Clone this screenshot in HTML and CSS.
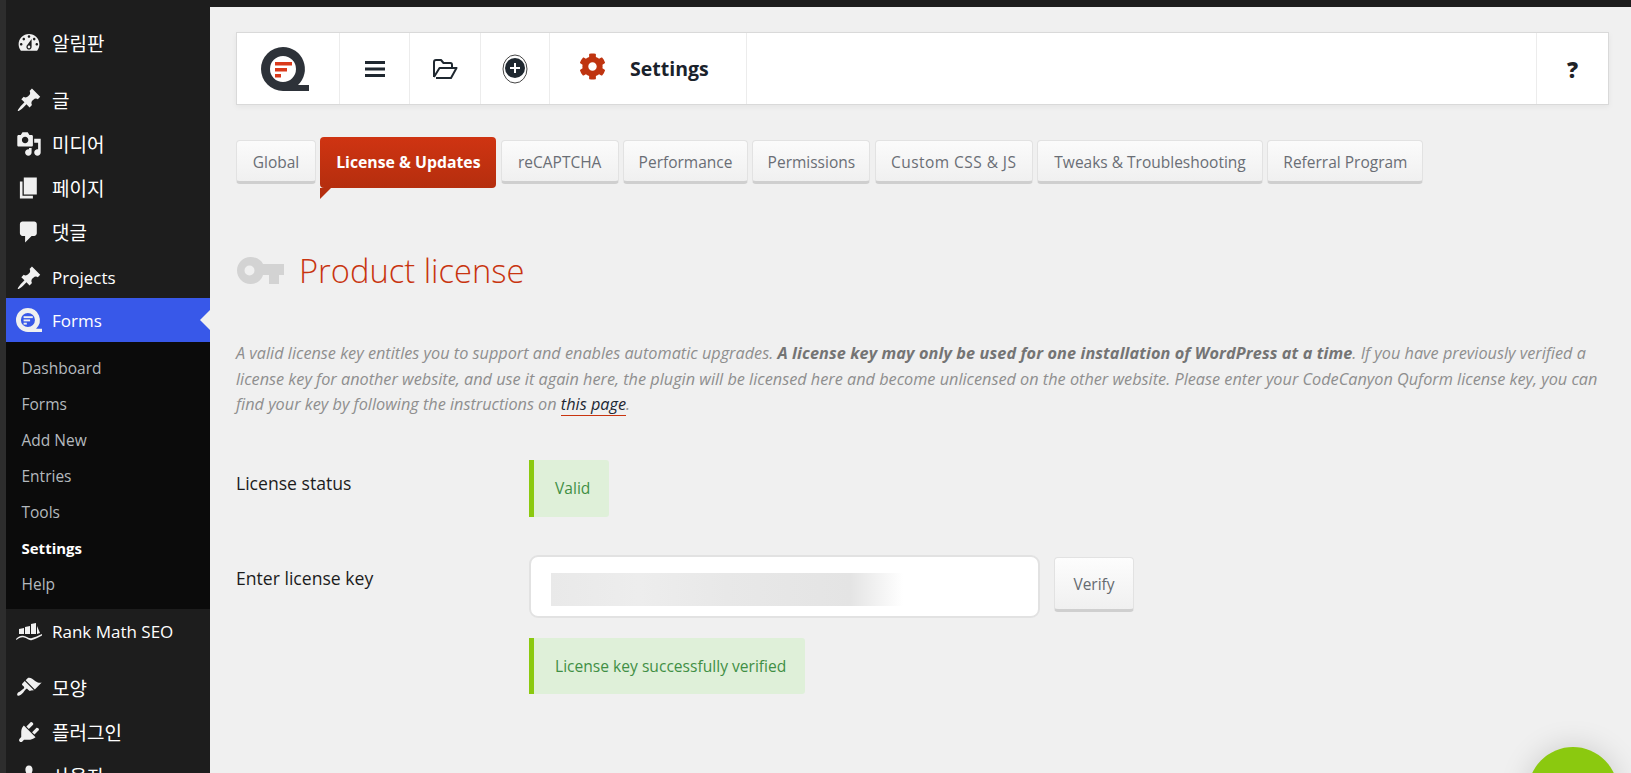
FILE: index.html
```html
<!DOCTYPE html>
<html lang="ko">
<head>
    <meta charset="UTF-8">
    <meta name="viewport" content="width=device-width, initial-scale=1.0">
    <title>Settings - Quform</title>
    <link rel="stylesheet" href="styles.css">
</head>
<body>

    <aside class="sidebar">
        <ul class="menu">
            <li class="menu-item menu-ko">
                <svg class="menu-icon" viewBox="0 0 20 20"><path d="M3.76 16h12.48c1.1-1.37 1.76-3.11 1.76-5 0-4.42-3.58-8-8-8s-8 3.58-8 8c0 1.89.66 3.63 1.76 5zM10 4c.55 0 1 .45 1 1s-.45 1-1 1-1-.45-1-1 .45-1 1-1zM6 6c.55 0 1 .45 1 1s-.45 1-1 1-1-.45-1-1 .45-1 1-1zm8 0c.55 0 1 .45 1 1s-.45 1-1 1-1-.45-1-1 .45-1 1-1zm-5.37 5.55L12 7v6c0 1.1-.9 2-2 2s-2-.9-2-2c0-.57.24-1.08.63-1.45zM4 10c.55 0 1 .45 1 1s-.45 1-1 1-1-.45-1-1 .45-1 1-1zm12 0c.55 0 1 .45 1 1s-.45 1-1 1-1-.45-1-1 .45-1 1-1zm-5 3c0-.55-.45-1-1-1s-1 .45-1 1 .45 1 1 1 1-.45 1-1z" fill-rule="evenodd"/></svg>
                <span>알림판</span>
            </li>
            <li class="menu-sep"></li>
            <li class="menu-item menu-ko">
                <svg class="menu-icon" viewBox="0 0 20 20"><path d="M10.44 3.02l1.82-1.82 6.36 6.35-1.83 1.82c-1.05-.68-2.48-.57-3.41.36l-.75.75c-.92.93-1.04 2.35-.35 3.41l-1.83 1.82-2.41-2.41-2.8 2.79c-.42.42-3.38 2.71-3.8 2.29s1.86-3.39 2.28-3.81l2.79-2.79L4.1 9.36l1.83-1.82c1.05.69 2.48.57 3.4-.36l.75-.75c.93-.92 1.05-2.35.36-3.41z"/></svg>
                <span>글</span>
            </li>
            <li class="menu-item menu-ko">
                <svg class="menu-icon" viewBox="0 0 20 20"><path d="M13 11V4c0-.55-.45-1-1-1h-1.67L9 1H5L3.67 3H2c-.55 0-1 .45-1 1v7c0 .55.45 1 1 1h10c.55 0 1-.45 1-1zM7 4.5c1.38 0 2.5 1.12 2.5 2.5S8.38 9.5 7 9.5 4.5 8.38 4.5 7 5.62 4.5 7 4.5zM14 6h5v10.5c0 1.38-1.12 2.5-2.5 2.5S14 17.88 14 16.5s1.12-2.5 2.5-2.5c.17 0 .34.02.5.05V9h-3V6zm-4 8.05V13h2v3.5c0 1.38-1.12 2.5-2.5 2.5S7 17.88 7 16.5 8.12 14 9.5 14c.17 0 .34.02.5.05z" fill-rule="evenodd"/></svg>
                <span>미디어</span>
            </li>
            <li class="menu-item menu-ko">
                <svg class="menu-icon" viewBox="0 0 20 20"><path d="M6 15V2h10v13H6zm-1 1h8v2H3V5h2v11z"/></svg>
                <span>페이지</span>
            </li>
            <li class="menu-item menu-ko">
                <svg class="menu-icon" viewBox="0 0 20 20"><path d="M5 2h9c1.1 0 2 .9 2 2v7c0 1.1-.9 2-2 2h-2l-5 5v-5H5c-1.1 0-2-.9-2-2V4c0-1.1.9-2 2-2z"/></svg>
                <span>댓글</span>
            </li>
            <li class="menu-item menu-item-low">
                <svg class="menu-icon" viewBox="0 0 20 20"><path d="M10.44 3.02l1.82-1.82 6.36 6.35-1.83 1.82c-1.05-.68-2.48-.57-3.41.36l-.75.75c-.92.93-1.04 2.35-.35 3.41l-1.83 1.82-2.41-2.41-2.8 2.79c-.42.42-3.38 2.71-3.8 2.29s1.86-3.39 2.28-3.81l2.79-2.79L4.1 9.36l1.83-1.82c1.05.69 2.48.57 3.4-.36l.75-.75c.93-.92 1.05-2.35.36-3.41z"/></svg>
                <span>Projects</span>
            </li>
            <li class="menu-item menu-item-active">
                <svg class="menu-icon" viewBox="0 0 48 44">
                    <path d="M22 0a22 22 0 1 0 0 44h26v-6h-11a22 22 0 0 0-15-38zm0 9a13 13 0 1 1 0 26 13 13 0 0 1 0-26z" fill-rule="evenodd"/>
                    <rect x="14" y="15" width="17" height="3.5"/><rect x="14" y="21" width="12" height="3.5"/><rect x="14" y="27" width="6" height="3.5"/>
                </svg>
                <span>Forms</span>
            </li>
            <li>
                <ul class="submenu">
                    <li>Dashboard</li>
                    <li>Forms</li>
                    <li>Add New</li>
                    <li>Entries</li>
                    <li>Tools</li>
                    <li class="submenu-current">Settings</li>
                    <li>Help</li>
                </ul>
            </li>
            <li class="menu-item">
                <svg class="menu-icon" viewBox="0 0 26 20">
                    <path d="M3 8l5-1v6H3zM9 6l5-1v8H9zM15 3l5-1v11h-5zM21 5l3 7-3 1z"/>
                    <path d="M0 18c3-3 5-3.500 8-3s5 3 8 2 6-2 10-4v1.500c-4 2-7 3.500-10 4.500s-5-2-8-2.500-5 .5-7.500 2.500z"/>
                </svg>
                <span>Rank Math SEO</span>
            </li>
            <li class="menu-sep"></li>
            <li class="menu-item menu-ko">
                <svg class="menu-icon" viewBox="0 0 20 20"><path d="M14.48 11.06L7.41 3.99l1.5-1.5c.5-.56 2.3-.47 3.51.32 1.21.8 1.43 1.28 2.91 2.1 1.18.64 2.45 1.26 4.45.85zm-.71.71L6.7 4.7 4.93 6.47c-.39.39-.39 1.02 0 1.41l1.06 1.06c.39.39.39 1.03 0 1.42-.6.6-1.43 1.11-2.21 1.69-.35.26-.7.53-1.01.84C1.43 13.23.4 14.89 1.2 15.69c.8.8 2.46-.23 3.82-1.57.31-.31.58-.66.84-1.01.58-.78 1.09-1.61 1.69-2.21.39-.39 1.03-.39 1.42 0l1.06 1.06c.39.39 1.02.39 1.41 0z"/></svg>
                <span>모양</span>
            </li>
            <li class="menu-item menu-ko">
                <svg class="menu-icon" viewBox="0 0 20 20"><path d="M13.11 4.36L9.87 7.6 8 5.73l3.24-3.24c.35-.34 1.05-.2 1.56.32.52.51.66 1.21.31 1.55zm-8 1.77l.91-1.12 9.01 9.01-1.19.84c-.71.71-2.63 1.16-3.82 1.16H6.14L4.9 17.26c-.59.59-1.54.59-2.12 0-.59-.58-.59-1.53 0-2.12l1.24-1.24v-3.88c0-1.13.4-3.19 1.09-3.89zm7.26 3.97l3.24-3.24c.34-.35 1.04-.21 1.55.31.52.51.66 1.21.31 1.55l-3.24 3.25z"/></svg>
                <span>플러그인</span>
            </li>
            <li class="menu-item menu-ko">
                <svg class="menu-icon" viewBox="0 0 20 20"><path d="M10 9.25c-2.27 0-2.73-3.44-2.73-3.44C7 4.02 7.82 2 9.97 2c2.16 0 2.98 2.02 2.71 3.81 0 0-.41 3.44-2.68 3.44zm0 2.57L12.72 10c2.39 0 4.52 2.33 4.52 4.53v2.49s-3.65 1.13-7.24 1.13c-3.65 0-7.24-1.13-7.24-1.13v-2.49c0-2.25 1.94-4.48 4.47-4.48z"/></svg>
                <span>사용자</span>
            </li>
        </ul>
    </aside>

    <main class="main">
        <div class="toolbar">
            <div class="tool tool-logo">
                <svg class="logo" viewBox="0 0 48 44">
                    <path class="logo-ring" d="M22 0a22 22 0 1 0 0 44h26v-6h-11a22 22 0 0 0-15-38zm0 9a13 13 0 1 1 0 26 13 13 0 0 1 0-26z" fill-rule="evenodd"/>
                    <rect class="logo-line" x="14" y="15" width="17" height="3.5"/><rect class="logo-line" x="14" y="21" width="12" height="3.5"/><rect class="logo-line" x="14" y="27" width="6" height="3.5"/>
                </svg>
            </div>
            <div class="tool tool-icon">
                <svg class="tool-svg" width="20" height="16" viewBox="0 0 20 16"><path d="M0 0h20v3H0zM0 6.500h20v3H0zM0 13h20v3H0z"/></svg>
            </div>
            <div class="tool tool-icon tool-wide">
                <svg width="26" height="20" viewBox="0 0 26 20"><path class="folder" d="M4 19h15l5.500-10H7.500L2 18M2 18V3c0-1 .6-2 2-2h5l2.500 3h7c1 0 1.500.7 1.500 2v3"/></svg>
            </div>
            <div class="tool tool-add">
                <svg width="26" height="30" viewBox="0 0 26 30">
                    <ellipse class="add-ring" cx="13" cy="15" rx="12" ry="14"/>
                    <circle class="add-disc" cx="13" cy="14" r="10"/>
                    <path class="add-plus" d="M13 9v10M8 14h10"/>
                </svg>
            </div>
            <div class="tool tool-title">
                <svg class="gear" width="27" height="27" viewBox="0 0 512 512"><path d="M487.4 315.7l-42.6-24.6c4.3-23.2 4.3-47 0-70.2l42.6-24.6c4.9-2.8 7.1-8.6 5.5-14-11.1-35.6-30-67.8-54.7-94.6-3.8-4.1-10-5.1-14.8-2.3L380.8 110c-17.9-15.4-38.5-27.3-60.8-35.1V25.8c0-5.6-3.9-10.5-9.4-11.7-36.7-8.2-74.3-7.8-109.2 0-5.5 1.2-9.4 6.1-9.4 11.7V75c-22.2 7.9-42.8 19.8-60.8 35.1L88.7 85.500c-4.9-2.8-11-1.9-14.8 2.3-24.7 26.7-43.6 58.9-54.7 94.6-1.7 5.4.6 11.2 5.5 14L67.3 221c-4.3 23.2-4.3 47 0 70.2l-42.6 24.6c-4.9 2.8-7.1 8.6-5.5 14 11.1 35.6 30 67.8 54.7 94.6 3.8 4.1 10 5.1 14.8 2.3l42.6-24.6c17.9 15.4 38.5 27.3 60.8 35.1v49.2c0 5.6 3.9 10.5 9.4 11.7 36.7 8.2 74.3 7.8 109.2 0 5.5-1.2 9.4-6.1 9.4-11.7v-49.2c22.2-7.9 42.8-19.8 60.8-35.1l42.6 24.6c4.9 2.8 11 1.9 14.8-2.3 24.7-26.7 43.6-58.9 54.7-94.6 1.5-5.5-.7-11.3-5.6-14.1zM256 336c-44.1 0-80-35.9-80-80s35.9-80 80-80 80 35.9 80 80-35.9 80-80 80z"/></svg>
                <span class="tool-label">Settings</span>
            </div>
            <div class="tool tool-spacer"></div>
            <div class="tool tool-help">?</div>
        </div>

        <div class="tabs">
            <div class="tab">Global</div>
            <div class="tab tab-active">License &amp; Updates</div>
            <div class="tab">reCAPTCHA</div>
            <div class="tab">Performance</div>
            <div class="tab">Permissions</div>
            <div class="tab tab-custom">Custom CSS &amp; JS</div>
            <div class="tab">Tweaks &amp; Troubleshooting</div>
            <div class="tab">Referral Program</div>
        </div>

        <h1 class="heading">
            <svg class="key" width="47" height="27" viewBox="0 0 47 27"><path d="M13.500 0C20 0 24.500 3.500 26 7h21v11h-5v9h-10v-9h-6c-1.500 5.500-6.500 9-12.500 9C6 27 0 21 0 13.500S6 0 13.500 0zm-1 8.500a5 5 0 1 0 0 10 5 5 0 0 0 0-10z" fill-rule="evenodd"/></svg>
            Product license
        </h1>

        <p class="intro">A valid license key entitles you to support and enables automatic upgrades. <strong>A license key may only be used for one installation of WordPress at a time</strong>. If you have previously verified a<br>license key for another website, and use it again here, the plugin will be licensed here and become unlicensed on the other website. Please enter your CodeCanyon Quform license key, you can<br>find your key by following the instructions on <a class="intro-link" href="#">this page</a>.</p>

        <div class="row">
            <div class="row-label">License status</div>
            <div class="row-body">
                <div class="notice">Valid</div>
            </div>
        </div>

        <div class="row row-key">
            <div class="row-label">Enter license key</div>
            <div class="row-body">
                <div class="key-line">
                    <div class="key-input"><div class="key-blur"></div></div>
                    <button class="verify">Verify</button>
                </div>
                <div class="notice notice-verified">License key successfully verified</div>
            </div>
        </div>
    </main>

    <div class="fab"></div>

</body>
</html>
```

FILE: styles.css
```css
* {
    box-sizing: border-box;
}
html, body {
    height: 100%;
}
body {
    margin: 0;
    display: flex;
    height: 773px;
    overflow: hidden;
    font-family: 'Open Sans', 'Noto Sans CJK KR', sans-serif;
    color: #1f2328;
    background-color: #1d1d1d;
}

/* sidebar */
.sidebar {
    flex: 0 0 210px;
    height: 773px;
    overflow: hidden;
    padding-top: 21px;
    background-color: #1d1d1d;
    border-left: 6px solid #2d2d2d;
}
.menu, .submenu {
    list-style: none;
    margin: 0;
    padding: 0;
}
.menu-sep {
    height: 13px;
}
.menu-item {
    position: relative;
    display: flex;
    align-items: center;
    height: 44px;
    padding-left: 10px;
    font-size: 17px;
    color: #fff;
}
.menu-ko {
    font-size: 19px;
}
.menu-item-low {
    padding-top: 3px;
}
.menu-icon {
    flex: 0 0 26px;
    width: 26px;
    height: 26px;
    margin-right: 10px;
    fill: #f0f0f0;
}
.menu-item-active {
    background-color: #3858e9;
}
.menu-item-active::after {
    content: "";
    position: absolute;
    right: 0;
    top: 12px;
    border: 10px solid transparent;
    border-left-width: 0;
    border-right-color: #f0f0f0;
}
.submenu {
    padding: 8px 0 7px;
    background-color: #0b0b0b;
}
.submenu li {
    height: 36px;
    line-height: 37px;
    padding-left: 15.500px;
    font-size: 15.500px;
    color: #b4b9be;
}
.submenu .submenu-current {
    color: #fff;
    font-weight: 700;
    font-size: 15px;
}

/* main column */
.main {
    flex: 1;
    margin-top: 7px;
    padding: 25px 22px 0 26px;
    background-color: #f0f0f0;
    font-size: 16.250px;
}
.toolbar {
    display: flex;
    height: 73px;
    background-color: #fff;
    border: 1px solid #d9d9d9;
    box-shadow: 0 2px 6px rgba(0,0,0,0.05);
}
.tool {
    display: flex;
    align-items: center;
    justify-content: center;
    border-right: 1px solid #ececec;
}
.tool-logo {
    width: 103px;
    padding-right: 7px;
}
.tool-icon { width: 70px; }
.tool-wide { width: 71px; }
.tool-add { width: 69px; }
.tool-title {
    width: 197px;
    justify-content: flex-start;
    padding-left: 29px;
}
.tool-spacer {
    flex: 1;
}
.tool-help {
    width: 71px;
    border-right: none;
    font-size: 22px;
    font-weight: 800;
}
.logo {
    width: 48px;
    height: 44px;
}
.logo-ring { fill: #2d3239; }
.logo-line { fill: #d9391a; }
.tool-svg { fill: #1f2830; }
.folder {
    fill: none;
    stroke: #1f2830;
    stroke-width: 2;
    stroke-linejoin: round;
}
.add-ring {
    fill: none;
    stroke: #444;
    stroke-width: 1;
}
.add-disc { fill: #1f2830; }
.add-plus {
    stroke: #fff;
    stroke-width: 2;
}
.gear {
    fill: #bf3410;
    margin-right: 24px;
    margin-top: -4px;
}
.tool-label {
    font-size: 19.500px;
    font-weight: 700;
    color: #1a222b;
}

/* tabs */
.tabs {
    display: grid;
    grid-template-columns: 80px 176px 118px 125px 118px 158px 226px 156px;
    column-gap: 4.350px;
    align-items: start;
    margin-top: 32px;
}
.tab {
    height: 44px;
    line-height: 42px;
    margin-top: 3px;
    font-size: 15.500px;
    text-align: center;
    white-space: nowrap;
    color: #6a6e75;
    background: linear-gradient(#fbfbfb, #f0f0f0);
    border: 1px solid #e2e2e2;
    border-bottom: 3px solid #cfcfcf;
    border-radius: 4px;
}
.tab-custom {
    letter-spacing: 0.450px;
}
.tab-active {
    position: relative;
    height: 51px;
    line-height: 51px;
    margin: 0;
    font-size: 15.800px;
    color: #fff;
    font-weight: 700;
    background: linear-gradient(#cf3412, #b52e0e);
    border: none;
}
.tab-active::after {
    content: "";
    position: absolute;
    left: 0;
    top: 51px;
    border-top: 11px solid #b52e0e;
    border-right: 11px solid transparent;
}

/* heading and intro */
.heading {
    display: flex;
    align-items: center;
    gap: 15px;
    height: 48px;
    margin: 58px 0 0;
    font-size: 32.700px;
    font-weight: 300;
    color: #c8340f;
}
.key {
    fill: #d3d3d3;
    margin-left: 1px;
}
.intro {
    margin: 47px 0 0;
    line-height: 25.500px;
    font-style: italic;
    white-space: nowrap;
    color: #8e8e8e;
}
.intro strong {
    color: #747474;
    letter-spacing: 0.100px;
}
.intro-link {
    color: #1d2733;
    text-decoration: none;
    border-bottom: 1px solid #c8340f;
}

/* license form */
.row {
    display: flex;
    margin-top: 42px;
}
.row-key {
    margin-top: 38px;
}
.row-label {
    flex: 0 0 293px;
    padding-top: 11px;
    line-height: 25px;
    font-size: 17.600px;
    color: #1c1c1c;
}
.notice {
    display: inline-block;
    height: 57px;
    line-height: 57px;
    padding: 0 19px 0 21px;
    font-size: 15.600px;
    color: #3f8f45;
    background-color: #dff0d9;
    border-left: 5px solid #8bc90f;
    border-radius: 0 3px 3px 0;
}
.notice-verified {
    display: block;
    width: 276px;
    height: 56px;
    line-height: 56px;
    margin-top: 20px;
    white-space: nowrap;
}
.key-line {
    display: flex;
    align-items: flex-start;
    gap: 14px;
}
.key-input {
    width: 511px;
    height: 63px;
    padding: 16px 0 0 20px;
    background-color: #fff;
    border: 2px solid #e2e2e2;
    border-radius: 9px;
}
.key-blur {
    width: 352px;
    height: 33px;
    background: linear-gradient(90deg, #e9e9e9, #ededed 25%, #e8e8e8 50%, #e4e4e4 85%, #fff);
}
.verify {
    width: 80px;
    height: 55px;
    margin-top: 2px;
    padding-top: 3px;
    font-family: inherit;
    font-size: 15.500px;
    color: #666a70;
    background: linear-gradient(#fdfdfd, #f0f0f0);
    border: 1px solid #e2e2e2;
    border-bottom: 3px solid #cfcfcf;
    border-radius: 4px;
}
.fab {
    position: fixed;
    left: 1528px;
    top: 747px;
    width: 90px;
    height: 90px;
    border-radius: 50%;
    background-color: #8bc90f;
    box-shadow: 0 0 30px rgba(0,0,0,0.15);
}
```
